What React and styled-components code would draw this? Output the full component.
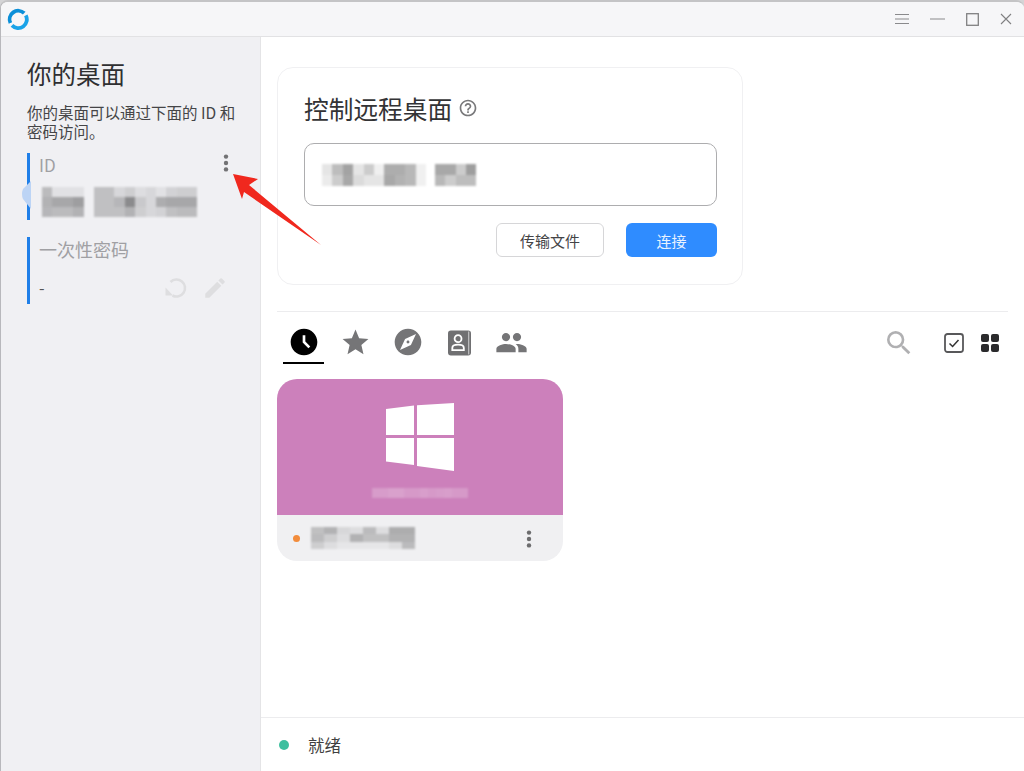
import React from 'react';
import styled, { createGlobalStyle } from 'styled-components';
import {
  MdAccessTimeFilled,
  MdStar,
  MdExplore,
  MdPeople,
  MdSearch,
  MdEdit,
  MdOutlineHelpOutline,
} from 'react-icons/md';

const GlobalStyle = createGlobalStyle`
  html, body, #root {
    margin: 0;
    padding: 0;
    height: 100%;
  }
  body {
    background: #d4d4d6;
    overflow: hidden;
    font-family: "Noto Sans CJK SC", "Liberation Sans", sans-serif;
  }
`;

const Window = styled.div`
  position: relative;
  width: 1024px;
  height: 771px;
  display: flex;
  flex-direction: column;
  background: #fff;
  border-top: 2px solid #c4c4c6;
  border-left: 1px solid #b8b8bc;
  border-radius: 8px 8px 0 0;
  box-sizing: border-box;
  overflow: hidden;
`;

const TitleBar = styled.header`
  height: 35px;
  flex: none;
  box-sizing: border-box;
  display: flex;
  align-items: center;
  justify-content: space-between;
  padding: 0 12px 0 6px;
  background: #f6f6f8;
  border-bottom: 1px solid #e2e2e4;
`;

const WindowButtons = styled.div`
  display: flex;
  align-items: center;
  gap: 21px;
  color: #8a8a8c;
`;

const Body = styled.div`
  flex: 1;
  display: flex;
  min-height: 0;
`;

const Sidebar = styled.aside`
  width: 260px;
  flex: none;
  box-sizing: border-box;
  padding: 19px 20px 0 26px;
  background: #f0f0f3;
  border-right: 1px solid #e4e4e6;
`;

const SideTitle = styled.h1`
  margin: 0;
  font-size: 24.5px;
  line-height: 36px;
  font-weight: 400;
  color: #2f2f31;
`;

const SideText = styled.p`
  margin: 11px 0 0;
  font-size: 15.5px;
  line-height: 19px;
  color: #454547;
  font-weight: 400;
`;

const Field = styled.div`
  position: relative;
  height: ${p => p.$h}px;
  margin-top: ${p => p.$mt}px;
  padding-left: 9px;
  border-left: 3px solid #1f7fe8;
  display: flex;
  flex-direction: column;
`;

const FieldLabel = styled.div`
  font-size: ${p => p.$size}px;
  line-height: 24px;
  color: #a0a0a3;
`;

const Dash = styled.div`
  margin-top: 14px;
  font-size: 16px;
  line-height: 24px;
  color: #555;
`;

const IconPair = styled.div`
  display: flex;
  align-items: center;
  gap: 14px;
  color: #dedee0;
`;

const Bubble = styled.svg`
  position: absolute;
  left: -9px;
  top: 28px;
`;

const MoreButton = styled.div`
  position: absolute;
  right: ${p => p.$right}px;
  top: ${p => p.$top}px;
`;

const Main = styled.main`
  flex: 1;
  display: flex;
  flex-direction: column;
  min-width: 0;
`;

const Content = styled.div`
  flex: 1;
  padding: 30px 16px 0 16px;
`;

const ConnectCard = styled.section`
  width: 466px;
  height: 218px;
  box-sizing: border-box;
  padding: 21px 25px 0 26px;
  border: 1px solid #f0f0f2;
  border-radius: 16px;
`;

const CardTitle = styled.h2`
  margin: 0;
  display: flex;
  align-items: center;
  gap: 6px;
  font-size: 24.7px;
  line-height: 38px;
  font-weight: 400;
  color: #333335;

  svg {
    color: #79797b;
  }
`;

const AddressInput = styled.div`
  height: 63px;
  box-sizing: border-box;
  margin-top: 16px;
  padding-left: 17px;
  display: flex;
  align-items: center;
  border: 1.5px solid #adadaf;
  border-radius: 10px;
`;

const ButtonRow = styled.div`
  display: flex;
  justify-content: flex-end;
  gap: 22px;
  margin-top: 17px;
`;

const Button = styled.div`
  height: 34px;
  box-sizing: border-box;
  display: flex;
  align-items: center;
  justify-content: center;
  width: ${p => (p.$primary ? 91 : 108)}px;
  font-size: 15px;
  border-radius: 6px;
  color: ${p => (p.$primary ? '#e8f2ff' : '#444446')};
  background: ${p => (p.$primary ? '#2f8cff' : '#fff')};
  border: ${p => (p.$primary ? 'none' : '1.5px solid #d6d6d8')};
`;

const Toolbar = styled.div`
  margin-top: 26px;
  height: 68px;
  box-sizing: border-box;
  border-top: 1px solid #ececee;
  display: flex;
  justify-content: space-between;
  padding: 0 5px 0 6px;
`;

const Tabs = styled.div`
  display: flex;
  gap: 11px;
`;

const Tab = styled.div`
  width: 41px;
  height: 52px;
  box-sizing: border-box;
  display: flex;
  align-items: center;
  justify-content: center;
  padding-top: 10px;
  color: ${p => (p.$active ? '#000' : '#757577')};
  border-bottom: 2px solid ${p => (p.$active ? '#000' : 'transparent')};
`;

const Tools = styled.div`
  display: flex;
  align-items: center;
  padding-bottom: 5px;
`;

const SearchTool = styled.div`
  display: flex;
  color: #b0b0b2;
  margin-right: 29px;
`;

const ViewTool = styled.div`
  display: flex;
  margin-right: ${p => p.$mr}px;
`;

const PeerCard = styled.article`
  width: 286px;
  height: 182px;
  border-radius: 20px;
  overflow: hidden;
  display: flex;
  flex-direction: column;
`;

const PeerThumb = styled.div`
  height: 136px;
  flex: none;
  background: #cc80bb;
  display: flex;
  flex-direction: column;
  align-items: center;
  padding-top: 24px;
  box-sizing: border-box;
`;

const PeerName = styled.div`
  margin-top: 17px;
`;

const PeerFooter = styled.div`
  position: relative;
  flex: 1;
  background: #f0f0f2;
  display: flex;
  align-items: center;
  padding-left: 16px;
  gap: 11px;
`;

const Dot = styled.span`
  width: ${p => p.$size}px;
  height: ${p => p.$size}px;
  flex: none;
  border-radius: 50%;
  background: ${p => p.$color};
`;

const StatusBar = styled.footer`
  height: 54px;
  flex: none;
  box-sizing: border-box;
  border-top: 1.5px solid #ececee;
  display: flex;
  align-items: center;
  gap: 19px;
  padding: 0 0 0 18px;
  font-size: 16.5px;
  color: #3f3f41;
`;

const MosaicGrid = styled.div`
  display: grid;
  grid-template-columns: repeat(${p => p.$cols}, ${p => p.$cell}px);
  grid-auto-rows: ${p => p.$cellH}px;
  filter: blur(0.8px);
  flex: none;
`;

const MosaicRow = styled.div`
  display: flex;
  gap: ${p => p.$gap}px;
`;

const Redacted = styled.div`
  margin-top: ${p => p.$mt}px;
  padding-left: ${p => p.$pl}px;
`;

const Arrow = styled.svg`
  position: absolute;
  left: 224px;
  top: 166px;
  pointer-events: none;
`;

const Mosaic = ({ cols, cell, cellH, values, tint = [0, 0, 0] }) => (
  <MosaicGrid $cols={cols} $cell={cell} $cellH={cellH}>
    {values.map((v, i) => (
      <div
        key={i}
        style={{ background: `rgba(${tint[0]}, ${tint[1]}, ${tint[2]}, ${v})` }}
      />
    ))}
  </MosaicGrid>
);

const Logo = () => (
  <svg width="22" height="22" viewBox="0 0 22 22" fill="none">
    <path d="M17.2 5.2 A8.6 8.6 0 0 0 3.4 15" stroke="#0b8fd8" strokeWidth="3.8" />
    <path d="M5 17.4 A8.6 8.6 0 0 0 18.8 7.4" stroke="#1aa3e8" strokeWidth="3.8" />
  </svg>
);

const Kebab = ({ color }) => (
  <svg width="6" height="18" viewBox="0 0 6 18" fill={color}>
    <circle cx="3" cy="2.6" r="2.2" />
    <circle cx="3" cy="9" r="2.2" />
    <circle cx="3" cy="15.4" r="2.2" />
  </svg>
);

const RefreshIcon = () => (
  <svg width="24" height="24" viewBox="0 0 24 24" fill="none" stroke="#dedee0" strokeWidth="2.6">
    <path d="M6.5 6 A8.5 8.5 0 1 1 8.5 19.5" />
    <path d="M1.5 11.5 L9 19.5 H1.5 Z" fill="#dedee0" stroke="none" />
  </svg>
);

const AddressBook = () => (
  <svg width="23" height="28" viewBox="0 -2 24 28">
    <rect x="0" y="0" width="24" height="26" rx="3" fill="#707072" />
    <rect x="21" y="1" width="1.2" height="24" fill="#c4c4c6" />
    <circle cx="10.5" cy="8.5" r="3.6" fill="none" stroke="#fff" strokeWidth="1.9" />
    <path d="M4.5 20.5 V18.2 Q4.5 14.8 10.5 14.8 Q16.5 14.8 16.5 18.2 V20.5 Z" fill="none" stroke="#fff" strokeWidth="1.9" />
  </svg>
);

const CheckIcon = () => (
  <svg width="20" height="20" viewBox="0 0 20 20" fill="none">
    <rect x="1" y="1" width="18" height="18" rx="2.5" stroke="#58585a" strokeWidth="1.8" />
    <path d="M5.5 10.5 L8.6 13.5 L14.5 7" stroke="#333" strokeWidth="1.5" />
  </svg>
);

const GridIcon = () => (
  <svg width="20" height="20" viewBox="0 0 20 20" fill="#2a2a2c">
    <rect x="1" y="1" width="8" height="8" rx="2" />
    <rect x="11" y="1" width="8" height="8" rx="2" />
    <rect x="1" y="11" width="8" height="8" rx="2" />
    <rect x="11" y="11" width="8" height="8" rx="2" />
  </svg>
);

const WindowsLogo = () => (
  <svg width="68" height="68" viewBox="0 0 68 68" fill="#fff">
    <polygon points="0,6 28,2.5 28,32 0,32" />
    <polygon points="31,2.2 68,0 68,32 31,32" />
    <polygon points="0,35 28,35 28,62 0,58.5" />
    <polygon points="31,35 68,35 68,68 31,63" />
  </svg>
);

const idLeft = [
  0.22, 0.06, 0.06, 0.06,
  0.26, 0.3, 0.3, 0.34,
  0.24, 0.22, 0.22, 0.26,
];
const idRight = [
  0.2, 0.2, 0.1, 0.14, 0.08, 0.1, 0.06, 0.12, 0.14, 0.14,
  0.2, 0.2, 0.24, 0.42, 0.16, 0.1, 0.28, 0.3, 0.3, 0.3,
  0.2, 0.2, 0.2, 0.26, 0.14, 0.1, 0.12, 0.2, 0.22, 0.22,
];
const inputLeft = [
  0.1, 0.26, 0.36, 0.1, 0.2, 0.06, 0.32, 0.32, 0.28, 0.06,
  0.08, 0.2, 0.34, 0.14, 0.1, 0.1, 0.34, 0.3, 0.28, 0.06,
];
const inputRight = [0.34, 0.34, 0.2, 0.38, 0.28, 0.2, 0.26, 0.26];
const thumbName = [0.22, 0.22, 0.26, 0.26, 0.2, 0.2, 0.24, 0.2, 0.22, 0.24, 0.2, 0.2];
const footerName = [
  0.2, 0.26, 0.1, 0.08, 0.22, 0.08, 0.28, 0.28,
  0.22, 0.14, 0.08, 0.26, 0.2, 0.2, 0.26, 0.26,
  0.14, 0.08, 0.04, 0.04, 0.04, 0.04, 0.08, 0.22,
];

export default function App() {
  return (
    <Window>
      <GlobalStyle />
      <TitleBar>
        <Logo />
        <WindowButtons>
          <svg width="14" height="12" viewBox="0 0 14 12" stroke="#8a8a8c" strokeWidth="1">
            <path d="M0 1.5H14M0 6H14M0 10.5H14" />
          </svg>
          <svg width="15" height="12" viewBox="0 0 15 12" stroke="#8a8a8c" strokeWidth="1.2">
            <path d="M0 6H15" />
          </svg>
          <svg width="13" height="13" viewBox="0 0 13 13" fill="none" stroke="#808082" strokeWidth="1.3">
            <rect x="0.7" y="0.7" width="11.6" height="11.6" />
          </svg>
          <svg width="12" height="12" viewBox="0 0 12 12" stroke="#808082" strokeWidth="1.1">
            <path d="M1 1L11 11M11 1L1 11" />
          </svg>
        </WindowButtons>
      </TitleBar>
      <Body>
        <Sidebar>
          <SideTitle>你的桌面</SideTitle>
          <SideText>
            你的桌面可以通过下面的 ID 和
            <br />
            密码访问。
          </SideText>
          <Field $h={67} $mt={12}>
            <FieldLabel $size={17}>ID</FieldLabel>
            <Bubble width="10" height="28" viewBox="0 0 10 28">
              <path d="M10 0 L2 8 Q0 13 2 18 L10 28 Z" fill="#bcd4f5" />
            </Bubble>
            <MoreButton $right={11} $top={0}>
              <Kebab color="#727274" />
            </MoreButton>
            <Redacted $mt={10} $pl={3}>
              <MosaicRow $gap={10}>
                <Mosaic cols={4} cell={10.4} cellH={10} values={idLeft} />
                <Mosaic cols={10} cell={10.4} cellH={10} values={idRight} />
              </MosaicRow>
            </Redacted>
          </Field>
          <Field $h={67} $mt={17}>
            <FieldLabel $size={18}>一次性密码</FieldLabel>
            <Dash>-</Dash>
            <MoreButton $right={12} $top={38}>
              <IconPair>
                <RefreshIcon />
                <MdEdit size={26} />
              </IconPair>
            </MoreButton>
          </Field>
        </Sidebar>
        <Main>
          <Content>
            <ConnectCard>
              <CardTitle>
                控制远程桌面
                <MdOutlineHelpOutline size={20} />
              </CardTitle>
              <AddressInput>
                <MosaicRow $gap={9}>
                  <Mosaic cols={10} cell={10.4} cellH={11} values={inputLeft} />
                  <Mosaic cols={4} cell={10.4} cellH={11} values={inputRight} />
                </MosaicRow>
              </AddressInput>
              <ButtonRow>
                <Button>传输文件</Button>
                <Button $primary>连接</Button>
              </ButtonRow>
            </ConnectCard>
            <Toolbar>
              <Tabs>
                <Tab $active>
                  <MdAccessTimeFilled size={32} />
                </Tab>
                <Tab>
                  <MdStar size={31} />
                </Tab>
                <Tab>
                  <MdExplore size={32} />
                </Tab>
                <Tab>
                  <AddressBook />
                </Tab>
                <Tab>
                  <MdPeople size={33} />
                </Tab>
              </Tabs>
              <Tools>
                <SearchTool>
                  <MdSearch size={32} />
                </SearchTool>
                <ViewTool $mr={16}>
                  <CheckIcon />
                </ViewTool>
                <ViewTool $mr={3}>
                  <GridIcon />
                </ViewTool>
              </Tools>
            </Toolbar>
            <PeerCard>
              <PeerThumb>
                <WindowsLogo />
                <PeerName>
                  <Mosaic cols={12} cell={8} cellH={10} values={thumbName} tint={[255, 255, 255]} />
                </PeerName>
              </PeerThumb>
              <PeerFooter>
                <Dot $size={7} $color="#f28c3c" />
                <Mosaic cols={8} cell={13} cellH={7.5} values={footerName} />
                <MoreButton $right={31} $top={14}>
                  <Kebab color="#6c6c6e" />
                </MoreButton>
              </PeerFooter>
            </PeerCard>
          </Content>
          <StatusBar>
            <Dot $size={10} $color="#3dbf9f" />
            就绪
          </StatusBar>
        </Main>
      </Body>
      <Arrow width="100" height="80" viewBox="0 0 100 80">
        <path d="M8 6 L33 11 L24 17 L96 77 L19 24 L17 31 Z" fill="#f0281e" />
      </Arrow>
    </Window>
  );
}
